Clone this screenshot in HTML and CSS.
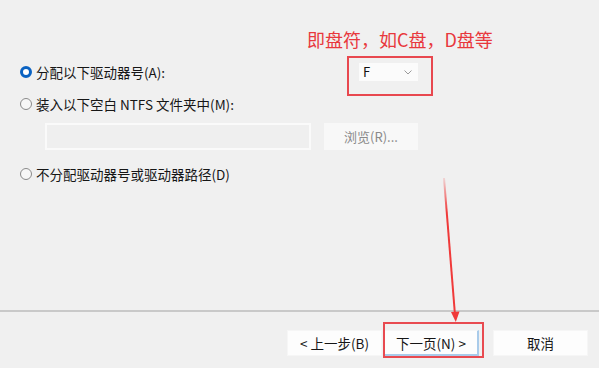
FILE: index.html
```html
<!DOCTYPE html>
<html lang="zh-CN">
<head>
<meta charset="utf-8">
<link rel="stylesheet" href="styles.css">
</head>
<body>
<div class="page">
  <div class="content">
    <div class="row row-first">
      <label class="option">
        <span class="radio checked"></span>
        <span class="label">分配以下驱动器号(A):</span>
      </label>
      <div class="drive-box">
        <div class="select">
          <span class="select-value">F</span>
          <svg class="chev" width="8" height="5" viewBox="0 0 8 5"><path d="M0.5 0.5 L4 4 L7.5 0.5" fill="none" stroke="#9a9a9a" stroke-width="1"/></svg>
        </div>
      </div>
    </div>
    <div class="row row-second">
      <label class="option">
        <span class="radio"></span>
        <span class="label">装入以下空白 NTFS 文件夹中(M):</span>
      </label>
    </div>
    <div class="path-row">
      <div class="textbox"></div>
      <button class="browse" type="button">浏览(R)...</button>
    </div>
    <div class="row row-third">
      <label class="option">
        <span class="radio"></span>
        <span class="label">不分配驱动器号或驱动器路径(D)</span>
      </label>
    </div>
  </div>
  <div class="footer">
    <button class="btn" type="button">&lt; 上一步(B)</button>
    <button class="btn btn-default" type="button">下一页(N) &gt;</button>
    <button class="btn btn-cancel" type="button">取消</button>
  </div>

  <div class="note">即盘符，如C盘，D盘等</div>
  <div class="next-mark"></div>
  <svg class="arrow" width="30" height="160" viewBox="0 0 30 160">
    <defs>
      <linearGradient id="fade" x1="0" y1="0" x2="0" y2="1">
        <stop offset="0" stop-color="#f03a3a" stop-opacity="0.15"/>
        <stop offset="0.25" stop-color="#f03a3a" stop-opacity="1"/>
        <stop offset="1" stop-color="#f03a3a" stop-opacity="1"/>
      </linearGradient>
    </defs>
    <line x1="8" y1="8" x2="19" y2="145" stroke="url(#fade)" stroke-width="2"/>
    <polygon points="15,142 23.5,141.5 19.8,152" fill="#f03a3a"/>
  </svg>
</div>
</body>
</html>
```

FILE: styles.css
```css
* { box-sizing: border-box; }

html, body {
  margin: 0;
  padding: 0;
  background: #f0f0f0;
}

body {
  font-family: "Noto Sans CJK SC", "Noto Sans", sans-serif;
  font-size: 13.5px;
  color: #161616;
}

.page {
  position: relative;
  width: 599px;
  height: 368px;
  overflow: hidden;
  background: #f0f0f0;
}

.content {
  height: 310px;
  padding: 62px 0 0 20px;
}

.row {
  display: flex;
  align-items: center;
  height: 20px;
}

.row-first {
  display: grid;
  grid-template-columns: 339px auto;
  align-items: center;
}

.row-second { margin-top: 12px; }
.row-third { margin-top: 14px; }

.option {
  display: flex;
  align-items: center;
  gap: 4px;
  line-height: 20px;
  white-space: nowrap;
}

.radio {
  width: 12px;
  height: 12px;
  border-radius: 50%;
  border: 1px solid #8a8a8a;
  background: #f7f7f7;
  flex: none;
}

.radio.checked {
  border: 3.5px solid #0a62c2;
  background: #ffffff;
}

.drive-box {
  position: relative;
  width: 59px;
  height: 18px;
}

.drive-box::after {
  content: "";
  position: absolute;
  left: -12px;
  top: -7px;
  width: 82px;
  height: 36px;
  border: 2px solid #e8484f;
}

.select {
  display: flex;
  align-items: center;
  justify-content: space-between;
  height: 18px;
  padding: 0 6px 0 4px;
  background: #fbfbfb;
  font-size: 13px;
  color: #111;
}

.select-value { line-height: 18px; }

.chev { margin-top: 1px; }

.path-row {
  display: flex;
  gap: 13px;
  margin: 9px 0 0 25px;
  height: 27px;
}

.textbox {
  width: 266px;
  height: 27px;
  border: 2px solid #fafafa;
  background: #efefef;
}

.browse {
  width: 94px;
  height: 27px;
  border: none;
  background: #f8f8f8;
  color: #8a8a8a;
  font-family: inherit;
  font-size: 13px;
  padding: 0;
}

.footer {
  border-top: 2px solid #c9c9c9;
  height: 58px;
  display: flex;
  justify-content: flex-end;
  align-items: flex-start;
  padding: 18px 11px 0 0;
}

.btn {
  width: 95px;
  height: 26px;
  padding: 0;
  border: 1px solid #f6f6f6;
  background: #fdfdfd;
  font-family: inherit;
  font-size: 13.5px;
  color: #161616;
  line-height: 22px;
}

.btn-default {
  margin-left: 2px;
  border: 1px solid #f6f6f6;
  border-right: 2px solid #a9cbea;
  border-bottom: 2px solid #a9cbea;
}

.btn-cancel { margin-left: 14px; }

.note {
  position: absolute;
  left: 307px;
  top: 26px;
  font-size: 18px;
  line-height: 26px;
  color: #e8383d;
  white-space: nowrap;
}

.next-mark {
  position: absolute;
  left: 383px;
  top: 322px;
  width: 101px;
  height: 36px;
  border: 2px solid #e84a50;
}

.arrow {
  position: absolute;
  left: 436px;
  top: 170px;
}
```
